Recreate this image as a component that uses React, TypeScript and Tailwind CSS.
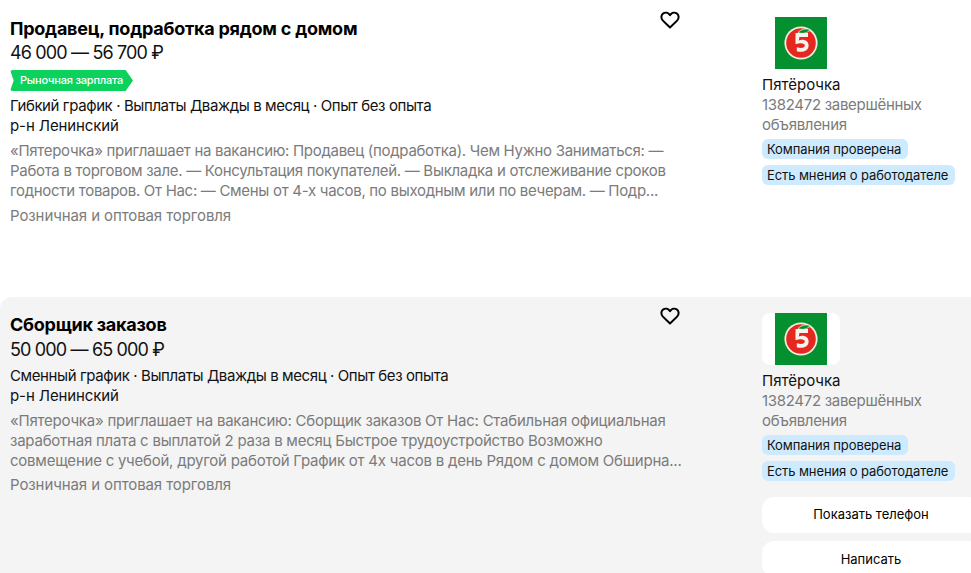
const Logo = () => (
  <div className="w-[52px] h-[52px] bg-[#04902f] flex items-center justify-center">
    <svg width="34" height="34" viewBox="0 0 34 34">
      <circle cx="17" cy="17" r="16.6" fill="#f3eee2" />
      <circle cx="17" cy="17" r="14.8" fill="#e4281f" />
      <path d="M14 6.500c3-3.400 8-4.400 12-3-2 3.600-7.500 5-12 3z" fill="#04902f" stroke="#f3eee2" strokeWidth="0.8" />
      <path d="M11.500 7h12.500v4h-8.600l-.6 3.400c5-1.700 9.800.5 9.800 5 0 5-5.200 7.500-11.800 5.800v-3.900c4.800 1.500 8 .5 8-1.800 0-2.200-3.600-3.200-9.300-1.200z" fill="#f7f3ea" />
    </svg>
  </div>
);

const HeartIcon = ({ active }: { active?: boolean }) => (
  <svg width="20" height="18" viewBox="0 0 20 18" fill="none" className={`absolute left-[650px] ${active ? "-top-[6px]" : "-top-[5px]"}`}>
    <path
      d="M10 16.500 2.900 9.600C.6 7.300 1 3.900 3.300 2.400c2.200-1.400 5-.7 6.700 1.700 1.700-2.400 4.500-3.100 6.700-1.700 2.300 1.500 2.700 4.900.4 7.200z"
      stroke="#000"
      strokeWidth="2"
      strokeLinejoin="round"
    />
  </svg>
);

type Job = {
  title: string;
  salary: string;
  market?: boolean;
  terms: string;
  desc: string;
  active?: boolean;
};

const jobs: Job[] = [
  {
    title: "Продавец, подработка рядом с домом",
    salary: "46 000 — 56 700 ₽",
    market: true,
    terms: "Гибкий график · Выплаты Дважды в месяц · Опыт без опыта",
    desc: "«Пятерочка» приглашает на вакансию: Продавец (подработка). Чем Нужно Заниматься: — Работа в торговом зале. — Консультация покупателей. — Выкладка и отслеживание сроков годности товаров. От Нас: — Смены от 4-х часов, по выходным или по вечерам. — Подр...",
  },
  {
    title: "Сборщик заказов",
    salary: "50 000 — 65 000 ₽",
    terms: "Сменный график · Выплаты Дважды в месяц · Опыт без опыта",
    desc: "«Пятерочка» приглашает на вакансию: Сборщик заказов От Нас: Стабильная официальная заработная плата с выплатой 2 раза в месяц Быстрое трудоустройство Возможно совмещение с учебой, другой работой График от 4х часов в день Рядом с домом Обширна...",
    active: true,
  },
];

const JobCard = ({ job }: { job: Job }) => (
  <div className={`flex w-[990px] pl-[10px] pt-[16px] ${job.active ? "h-[276px] bg-[#f4f4f4] rounded-tl-[12px]" : "h-[297px]"}`}>
    <div className="relative w-[660px] shrink-0">
      <HeartIcon active={job.active} />
      <h2 className={`text-[18px] font-bold text-black tracking-[-0.24px] ${job.active ? "-mt-[2px] leading-[28px]" : "leading-[26px]"}`}>{job.title}</h2>
      <p className="text-[18px] leading-[22px] text-[#111] tracking-[-0.85px]">{job.salary}</p>
      {job.market && (
        <div className="mt-[6px] mb-[5px] h-[21px] w-[123px] flex items-center pl-[10px] text-[11px] font-medium tracking-[-0.2px] text-white bg-[#0cd25d] rounded-l-[3px] [clip-path:polygon(0_0,94%_0,100%_50%,94%_100%,0_100%,3%_50%)]">
          Рыночная зарплата
        </div>
      )}
      <p className={`text-[15px] leading-[20px] text-[#111] tracking-[-0.4px] ${job.market ? "" : "mt-[5px]"}`}>{job.terms}</p>
      <p className="text-[15px] leading-[20px] text-[#111] tracking-[-0.1px]">р-н Ленинский</p>
      <p className={`mt-[5px] text-[15px] leading-[20px] text-[#7b7b7b] ${job.active ? "w-[680px] tracking-[-0.23px]" : "tracking-[-0.3px]"}`}>{job.desc}</p>
      <p className={`text-[15px] leading-[20px] text-[#7b7b7b] tracking-[-0.1px] ${job.active ? "mt-[4px]" : "mt-[5px]"}`}>Розничная и оптовая торговля</p>
    </div>
    <div className={`ml-[92px] w-[230px] shrink-0 text-[15px] leading-[20px] ${job.active ? "" : "mt-px"}`}>
      <div className={`w-[78px] h-[52px] flex justify-center rounded-[8px] ${job.active ? "bg-white" : ""}`}>
        <Logo />
      </div>
      <p className="mt-[6px] text-[#111]">Пятёрочка</p>
      <p className="w-[190px] text-[#7b7b7b] tracking-[-0.3px]">1382472 завершённых объявления</p>
      <div className="flex flex-col items-start gap-[6px] mt-[4px] text-[13px] tracking-[-0.1px]">
        <span className="h-[20px] pl-[5px] pr-[7px] leading-[20px] rounded-[6px] bg-[#cdeafe] text-[#111]">Компания проверена</span>
        <span className="h-[20px] pl-[5px] pr-[7px] leading-[20px] rounded-[6px] bg-[#cdeafe] text-[#111]">Есть мнения о работодателе</span>
      </div>
      {job.active && (
        <div className="mt-[16px] flex flex-col gap-[8px] text-[13px] text-black">
          <button className="h-[36px] w-[218px] pb-[2px] rounded-[12px] bg-white">Показать телефон</button>
          <button className="h-[36px] w-[218px] rounded-[12px] bg-white">Написать</button>
        </div>
      )}
    </div>
  </div>
);

export default function App() {
  return (
    <div className="w-[971px] h-[573px] overflow-hidden bg-white font-['Inter',sans-serif]">
      {jobs.map((job) => (
        <JobCard key={job.title} job={job} />
      ))}
    </div>
  );
}
